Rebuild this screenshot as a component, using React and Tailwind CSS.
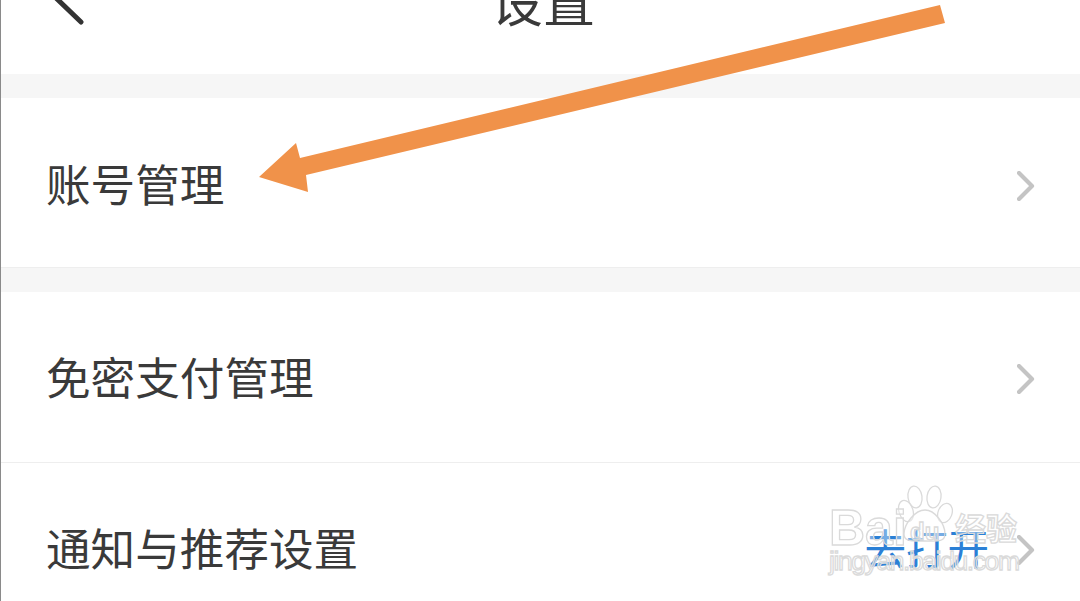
import React from 'react';

const cjk = "font-['Noto_Sans_CJK_SC','Liberation_Sans',sans-serif]";

const Chevron = () => (
  <svg width="18" height="30" viewBox="0 0 18 30" fill="none" className="mt-[3px] shrink-0">
    <path d="M2 2 L15 15 L2 28" stroke="#c4c4c4" strokeWidth="4.2" strokeLinecap="round" strokeLinejoin="round" />
  </svg>
);

const SettingRow = ({ label, action, className }) => (
  <div className={`flex items-center justify-between pl-[45px] pr-[45px] bg-white ${className}`}>
    <span className="mt-[-2px] text-[44.6px] leading-none text-[#3a3a3a] whitespace-nowrap">{label}</span>
    <div className="flex items-center gap-[28px]">
      {action && <span className="text-[41.5px] leading-none text-[#2b80d6] whitespace-nowrap">{action}</span>}
      <Chevron />
    </div>
  </div>
);

const Divider = () => <div className="h-[24px] bg-[#f6f6f6]" />;

export default function App() {
  return (
    <div className={`relative h-[601px] w-[1080px] overflow-hidden bg-white border-l border-[#8a8a8a] ${cjk}`}>
      {/* header, cut off by the top of the screenshot */}
      <div className="relative flex h-[74px] justify-center overflow-hidden bg-white">
        <svg width="50" height="40" viewBox="0 0 50 40" fill="none" className="absolute left-[45px] top-0">
          <path d="M9 -3 L35 22" stroke="#333333" strokeWidth="5" strokeLinecap="round" />
        </svg>
        <span className="ml-[5px] mt-[-26px] h-[52px] text-[52px] leading-[52px] text-[#3a3a3a]">设置</span>
      </div>
      <Divider />
      <SettingRow label="账号管理" className="h-[170px] pt-[3px] border-b border-[#eeeeee]" />
      <Divider />
      <SettingRow label="免密支付管理" className="h-[171px] border-b border-[#eeeeee]" />
      <SettingRow label="通知与推荐设置" action="去打开" className="h-[170px]" />

      {/* orange annotation arrow */}
      <svg width="1080" height="601" viewBox="0 0 1080 601" className="absolute left-[-1px] top-0 pointer-events-none">
        <polygon points="259,177 296,143 300,158 940,5 945,23 306,175 308,192" fill="#f0924a" />
      </svg>

      {/* baidu watermark */}
      <svg width="1080" height="601" viewBox="0 0 1080 601" className="absolute left-[-1px] top-0 pointer-events-none">
        <g fill="#ffffff" fillOpacity="0.35" stroke="#dadada" strokeWidth="1.3">
          <ellipse cx="906" cy="511" rx="7" ry="11" transform="rotate(-18 906 511)" />
          <ellipse cx="915" cy="497" rx="7" ry="11" transform="rotate(-8 915 497)" />
          <ellipse cx="934" cy="497" rx="7" ry="11" transform="rotate(8 934 497)" />
          <ellipse cx="945" cy="513" rx="7" ry="10" transform="rotate(20 945 513)" />
          <path d="M925 510 C935 510 945 524 945 534 C945 543 935 541 925 541 C915 541 904 543 904 534 C904 524 915 510 925 510 Z" />
          <text x="829" y="545" fontFamily="Liberation Sans" fontWeight="700" fontSize="50">Bai</text>
          <text x="910" y="540" fontFamily="Liberation Sans" fontWeight="700" fontSize="24">du</text>
          <text x="955" y="540" fontFamily="Noto Sans CJK SC" fontWeight="700" fontSize="31">经验</text>
          <text x="829" y="570" fontFamily="Liberation Sans" fontSize="26.5" textLength="191">jingyan.baidu.com</text>
        </g>
      </svg>
    </div>
  );
}
